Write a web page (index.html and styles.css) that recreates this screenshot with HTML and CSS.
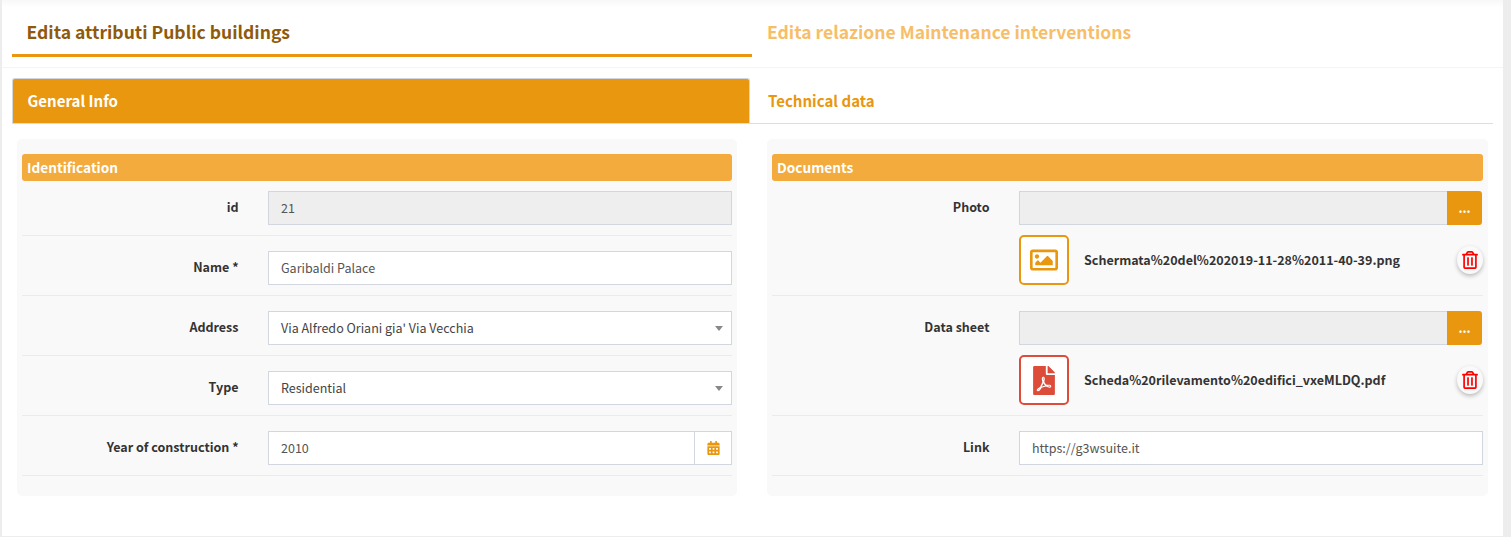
FILE: index.html
```html
<!DOCTYPE html>
<html lang="en">
<head>
<meta charset="utf-8">
<title>Public buildings</title>
<link rel="stylesheet" href="styles.css">
</head>
<body>
<main class="sheet">
  <header class="heads">
    <div class="head head-active">Edita attributi Public buildings</div>
    <div class="head">Edita relazione Maintenance interventions</div>
  </header>
  <nav class="tabs">
    <div class="tab tab-active">General Info</div>
    <div class="tab">Technical data</div>
  </nav>
  <div class="panels">
    <section class="panel">
      <h2 class="panel-title">Identification</h2>
      <div class="row row-first"><label class="label">id</label><div class="field"><div class="input disabled">21</div></div></div>
      <div class="row"><label class="label">Name *</label><div class="field"><div class="input">Garibaldi Palace</div></div></div>
      <div class="row"><label class="label">Address</label><div class="field"><div class="input select">Via Alfredo Oriani gia' Via Vecchia<i class="caret"></i></div></div></div>
      <div class="row"><label class="label">Type</label><div class="field"><div class="input select">Residential<i class="caret"></i></div></div></div>
      <div class="row"><label class="label">Year of construction *</label><div class="field"><div class="group"><div class="input">2010</div><div class="addon">
        <svg class="cal" viewBox="0 0 448 512"><path fill="currentColor" d="M0 464c0 26.500 21.500 48 48 48h352c26.500 0 48-21.500 48-48V192H0v272zm320-196c0-6.600 5.400-12 12-12h40c6.600 0 12 5.400 12 12v40c0 6.600-5.400 12-12 12h-40c-6.600 0-12-5.400-12-12v-40zm0 128c0-6.600 5.400-12 12-12h40c6.600 0 12 5.400 12 12v40c0 6.600-5.400 12-12 12h-40c-6.600 0-12-5.400-12-12v-40zM192 268c0-6.600 5.400-12 12-12h40c6.600 0 12 5.400 12 12v40c0 6.600-5.400 12-12 12h-40c-6.600 0-12-5.400-12-12v-40zm0 128c0-6.600 5.400-12 12-12h40c6.600 0 12 5.400 12 12v40c0 6.600-5.400 12-12 12h-40c-6.600 0-12-5.400-12-12v-40zM64 268c0-6.600 5.400-12 12-12h40c6.600 0 12 5.400 12 12v40c0 6.600-5.400 12-12 12H76c-6.600 0-12-5.400-12-12v-40zm0 128c0-6.600 5.400-12 12-12h40c6.600 0 12 5.400 12 12v40c0 6.600-5.400 12-12 12H76c-6.600 0-12-5.400-12-12v-40zM400 64h-48V16c0-8.800-7.200-16-16-16h-32c-8.800 0-16 7.200-16 16v48H160V16c0-8.800-7.200-16-16-16h-32c-8.800 0-16 7.200-16 16v48H48C21.500 64 0 85.500 0 112v48h448v-48c0-26.500-21.500-48-48-48z"/></svg>
      </div></div></div></div>
    </section>
    <section class="panel panel-docs">
      <h2 class="panel-title">Documents</h2>
      <div class="row row-first"><label class="label">Photo</label><div class="field">
        <div class="group"><div class="input disabled"></div><div class="browse">...</div></div>
        <div class="file"><div class="thumb">
          <svg class="img-icon" viewBox="0 0 512 512"><path fill="currentColor" d="M464 64H48C21.490 64 0 85.490 0 112v288c0 26.510 21.490 48 48 48h416c26.510 0 48-21.490 48-48V112c0-26.510-21.490-48-48-48zm-6 336H54a6 6 0 0 1-6-6V118a6 6 0 0 1 6-6h404a6 6 0 0 1 6 6v276a6 6 0 0 1-6 6zM128 152c-22.091 0-40 17.909-40 40s17.909 40 40 40 40-17.909 40-40-17.909-40-40-40zM96 352h320v-80l-87.515-87.515c-4.686-4.686-12.284-4.686-16.971 0L192 304l-39.515-39.515c-4.686-4.686-12.284-4.686-16.971 0L96 304v48z"/></svg>
        </div><span class="file-name">Schermata%20del%202019-11-28%2011-40-39.png</span><span class="trash"><svg viewBox="0 0 448 512"><path fill="currentColor" d="M268 416h24a12 12 0 0 0 12-12V188a12 12 0 0 0-12-12h-24a12 12 0 0 0-12 12v216a12 12 0 0 0 12 12zM432 80h-82.410l-34-56.700A48 48 0 0 0 274.410 0H173.590a48 48 0 0 0-41.160 23.300L98.410 80H16A16 16 0 0 0 0 96v16a16 16 0 0 0 16 16h16v336a48 48 0 0 0 48 48h288a48 48 0 0 0 48-48V128h16a16 16 0 0 0 16-16V96a16 16 0 0 0-16-16zM171.840 50.910A6 6 0 0 1 177 48h94a6 6 0 0 1 5.150 2.910L293.610 80H154.390zM368 464H80V128h288zm-212-48h24a12 12 0 0 0 12-12V188a12 12 0 0 0-12-12h-24a12 12 0 0 0-12 12v216a12 12 0 0 0 12 12z"/></svg></span></div>
      </div></div>
      <div class="row"><label class="label">Data sheet</label><div class="field">
        <div class="group"><div class="input disabled"></div><div class="browse">...</div></div>
        <div class="file"><div class="thumb thumb-pdf">
          <svg class="pdf-icon" viewBox="0 0 384 512"><path fill="currentColor" d="M181.900 256.100c-5-16-4.900-46.900-2-46.900 8.400 0 7.600 36.900 2 46.900zm-1.700 47.200c-7.700 20.200-17.300 43.300-28.400 62.700 18.300-7 39-17.200 62.900-21.900-12.700-9.600-24.900-23.400-34.500-40.800zM86.100 428.100c0 .8 13.200-5.400 34.900-40.200-6.700 6.300-29.100 24.500-34.900 40.200zM248 160h136v328c0 13.300-10.700 24-24 24H24c-13.300 0-24-10.700-24-24V24C0 10.700 10.700 0 24 0h200v136c0 13.200 10.800 24 24 24zm-8 171.800c-20-12.200-33.300-29-42.700-53.800 4.500-18.500 11.600-46.600 6.200-64.200-4.700-29.400-42.400-26.500-47.800-6.800-5 18.300-.4 44.100 8.100 77-11.600 27.600-28.700 64.600-40.800 85.800-.1 0-.1.1-.2.1-27.100 13.900-73.600 44.500-54.500 68 5.600 6.900 16 10 21.500 10 17.900 0 35.700-18 61.100-61.800 25.800-8.500 54.100-19.100 79-23.200 21.700 11.800 47.100 19.500 64 19.500 29.200 0 31.200-32 19.700-43.400-13.900-13.600-54.300-9.700-73.600-7.200zM377 105L279 7c-4.500-4.500-10.600-7-17-7h-6v128h128v-6.100c0-6.300-2.500-12.400-7-16.900zm-74.100 255.300c4.100-2.700-2.500-11.900-42.800-9 37.100 15.800 42.800 9 42.800 9z"/></svg>
        </div><span class="file-name">Scheda%20rilevamento%20edifici_vxeMLDQ.pdf</span><span class="trash"><svg viewBox="0 0 448 512"><path fill="currentColor" d="M268 416h24a12 12 0 0 0 12-12V188a12 12 0 0 0-12-12h-24a12 12 0 0 0-12 12v216a12 12 0 0 0 12 12zM432 80h-82.410l-34-56.700A48 48 0 0 0 274.410 0H173.590a48 48 0 0 0-41.160 23.300L98.410 80H16A16 16 0 0 0 0 96v16a16 16 0 0 0 16 16h16v336a48 48 0 0 0 48 48h288a48 48 0 0 0 48-48V128h16a16 16 0 0 0 16-16V96a16 16 0 0 0-16-16zM171.840 50.910A6 6 0 0 1 177 48h94a6 6 0 0 1 5.150 2.910L293.610 80H154.390zM368 464H80V128h288zm-212-48h24a12 12 0 0 0 12-12V188a12 12 0 0 0-12-12h-24a12 12 0 0 0-12 12v216a12 12 0 0 0 12 12z"/></svg></span></div>
      </div></div>
      <div class="row"><label class="label">Link</label><div class="field"><div class="input">https://g3wsuite.it</div></div></div>
    </section>
  </div>
</main>
</body>
</html>
```
FILE: styles.css
```css
* { box-sizing: border-box; }
body {
  margin: 0;
  height: 537px;
  padding: 0 8px 1px 2px;
  overflow: hidden;
  background: #ededed;
  color: #333;
  font-family: "Noto Sans CJK SC", "Noto Sans", sans-serif;
  font-size: 12.53px;
}
.sheet {
  height: 536px;
  background: linear-gradient(#f8f8f8, #fff 7px);
}
.heads {
  display: flex;
  height: 68px;
  padding: 0 10px;
  border-bottom: 1px solid #f4f4f4;
}
.head {
  width: 740px;
  height: 57px;
  padding: 8px 15px 0;
  font-size: 17.55px;
  font-weight: 700;
  line-height: 48px;
  color: #f7be69;
}
.head-active {
  padding-left: 14.500px;
  color: #8f5a0c;
  border-bottom: 3px solid #e9970f;
}
.tabs {
  display: flex;
  height: 46px;
  margin: 10px 10px 0;
  border-bottom: 1px solid #ddd;
}
.tab {
  width: 738px;
  padding: 0 18px;
  font-size: 15.05px;
  font-weight: 700;
  line-height: 45px;
  color: #e9970f;
}
.tab-active {
  padding: 0 14.500px;
  background: #e9970f;
  color: #fff;
  line-height: 43px;
  border: 1px solid #d2d6de;
  border-bottom: 0;
  border-radius: 3px 3px 0 0;
}
.panels {
  display: flex;
  gap: 30px;
  margin: 15px 15px 0;
}
.panel {
  width: 720px;
  height: 357px;
  padding: 15px 5px;
  background: #f9f9f9;
  border-radius: 5px;
}
.panel-docs { width: 721px; }
.panel-title {
  height: 27px;
  margin: 0;
  padding: 0 5px;
  font-size: 13.65px;
  line-height: 26px;
  color: #fff;
  background: #f2ab3c;
  border-radius: 3px;
}
.row {
  display: flex;
  padding: 15px 0 10px;
  border-bottom: 1px solid #ebebeb;
}
.row-first { padding-top: 10px; }
.label {
  flex: 1;
  padding-right: 29.500px;
  text-align: right;
  font-weight: 700;
  line-height: 32px;
}
.field { width: 464px; }
.input {
  display: flex;
  flex: 1;
  height: 34px;
  padding: 0 12px;
  border: 1px solid #d2d6de;
  background: #fff;
  color: #555;
  line-height: 31px;
}
.disabled { background: #eee; }
.select { justify-content: space-between; padding-right: 8px; color: #444; }
.caret {
  align-self: center;
  border: 4px solid transparent;
  border-top: 5px solid #888;
  border-bottom: 0;
}
.group { display: flex; }
.addon {
  display: flex;
  align-items: center;
  justify-content: center;
  width: 37px;
  background: #fff;
  border: 1px solid #d2d6de;
  border-left: 0;
  color: #e9970f;
}
.cal { width: 13px; height: 14px; }
.browse {
  width: 35px;
  margin-right: 1px;
  background: #e9970f;
  border-radius: 0 3px 3px 0;
  color: #fff;
  font-weight: 700;
  text-align: center;
  line-height: 34px;
}
.group .disabled { border-right: 0; }
.file {
  display: flex;
  align-items: center;
  margin-top: 10px;
}
.thumb {
  display: flex;
  align-items: center;
  justify-content: center;
  width: 50px;
  height: 50px;
  background: #fff;
  border: 2px solid #e9970f;
  border-radius: 5px;
  color: #e9970f;
}
.thumb-pdf { color: #dd4b39; border-color: #dd4b39; }
.img-icon { width: 28px; height: 28px; }
.pdf-icon { width: 22px; height: 29px; }
.file-name {
  flex: 1;
  padding: 0 0 2px 15px;
  font-weight: 700;
}
.trash {
  display: flex;
  align-items: center;
  justify-content: center;
  width: 26px;
  height: 28px;
  border-radius: 50%;
  color: #f00;
  box-shadow: 0 2px 4px rgba(0, 0, 0, .25);
}
.trash svg { width: 16px; height: 18px; }
```
